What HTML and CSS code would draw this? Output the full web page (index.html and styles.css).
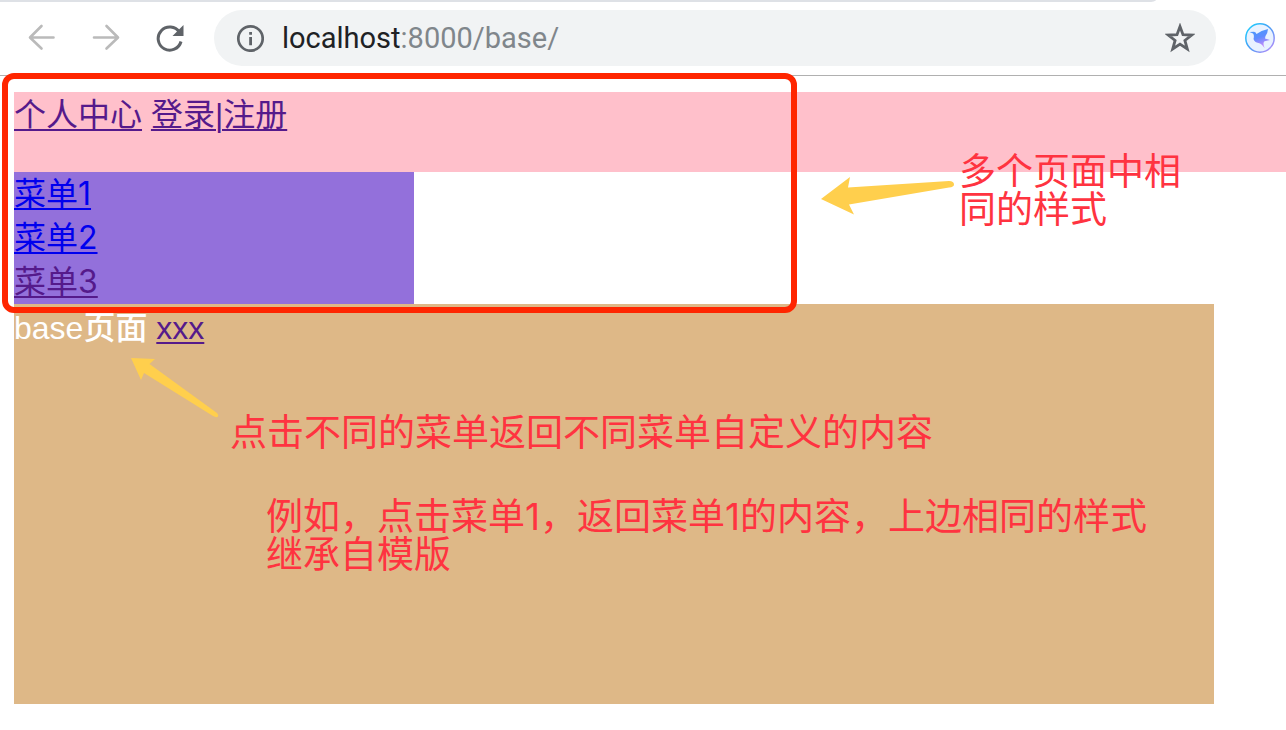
FILE: index.html
```html
<!DOCTYPE html>
<html lang="zh-CN">
<head>
<meta charset="utf-8">
<title>base</title>
<link rel="stylesheet" href="styles.css">
</head>
<body>
<header class="browser">
  <div class="tab-strip"></div>
  <div class="toolbar">
    <nav class="history">
      <button class="tool" aria-label="后退" disabled><svg width="28" height="28" viewBox="0 0 28 28" fill="none" stroke="#bababa" stroke-width="2.6" stroke-linecap="round" stroke-linejoin="round"><path d="M25.500 13.500H2.500M13.500 2L2 13.500L13.500 24.500"/></svg></button>
      <button class="tool" aria-label="前进" disabled><svg width="28" height="28" viewBox="0 0 28 28" fill="none" stroke="#bababa" stroke-width="2.6" stroke-linecap="round" stroke-linejoin="round"><path d="M2 13.500H25M14.500 2L26 13.500L14.500 24.500"/></svg></button>
      <button class="tool" aria-label="重新加载"><svg width="28" height="28" viewBox="0 0 28 28" fill="none"><path d="M23.500 8.200A11.600 11.600 0 1 0 25 17.500" stroke="#5f6368" stroke-width="3"/><path d="M27.500 1V12H16.500Z" fill="#5f6368"/></svg></button>
    </nav>
    <div class="address">
      <button class="icon" aria-label="网站信息"><svg width="28" height="28" viewBox="0 0 28 28"><circle cx="14.500" cy="14.500" r="12.200" fill="none" stroke="#5f6368" stroke-width="2.700"/><path d="M13.200 8h2.800v2.800h-2.800zM13.200 12.900h2.800v8.300h-2.800z" fill="#5f6368"/></svg></button>
      <div class="url" role="textbox" aria-label="地址" contenteditable="true" spellcheck="false">localhost<span class="path">:8000/base/</span></div>
      <button class="icon" aria-label="添加书签"><svg width="30" height="30" viewBox="0 0 30 30"><path d="M15 3.500L18 11.700L26.700 12L19.900 17.400L22.300 26L15 21.100L7.700 26L10.100 17.400L3.300 12L12 11.700Z" fill="none" stroke="#5f6368" stroke-width="2.800"/></svg></button>
    </div>
    <button class="icon" aria-label="扩展程序"><svg width="30" height="30" viewBox="0 0 30 30"><defs><linearGradient id="ring" x1="0" y1="0" x2="1" y2="1"><stop offset="0" stop-color="#16d5ff"/><stop offset=".5" stop-color="#4b9bf5"/><stop offset="1" stop-color="#c58bfa"/></linearGradient><linearGradient id="bird" x1="0" y1="0" x2=".4" y2="1"><stop offset="0" stop-color="#429cfb"/><stop offset=".55" stop-color="#5e8bff"/><stop offset="1" stop-color="#c58bfa"/></linearGradient></defs><circle cx="15" cy="15" r="14.200" fill="#e9f2ff" stroke="url(#ring)" stroke-width="1.500"/><path d="M4.500 9L9 8.700Q11 9 11.500 11Q16 7.500 23 6Q22.800 10 20.500 13L20 15.500L25 17L19.500 18.200Q17.500 19.500 19.500 25Q16.500 20.500 13.500 20Q9.500 19.500 8.500 16Q9.500 12 8 10.500Z" fill="url(#bird)"/></svg></button>
  </div>
</header>

<main class="page">
  <div class="top"><a class="visited" href="#center">个人中心</a> <a class="visited" href="#login">登录|注册</a></div>
  <nav class="menu">
    <a href="#menu1">菜单1</a>
    <a href="#menu2">菜单2</a>
    <a class="visited" href="#menu3">菜单3</a>
  </nav>
  <section class="content">base页面 <a class="visited" href="#xxx">xxx</a></section>
</main>

<div class="frame"></div>
<svg class="arrow arrow-shared" width="134" height="40" viewBox="0 0 134 40" fill="#ffcf4d"><path d="M0 22L29 0L27 10.500L128 4Q133 4 133 7.500Q133 10 128 10.500L28 27.500L33 37.500Z"/></svg>
<svg class="arrow arrow-content" width="90" height="62" viewBox="0 0 90 62" fill="#ffcf4d"><path d="M0 0L24 1L18.500 6L86 55Q88 57 87 58.500Q85.500 60 82 58L13 15L10 22Z"/></svg>
<p class="note note-shared">多个页面中相<br>同的样式</p>
<p class="note note-content">点击不同的菜单返回不同菜单自定义的内容</p>
<p class="note note-example">例如，点击菜单1，返回菜单1的内容，上边相同的样式<br>继承自模版</p>
</body>
</html>
```
FILE: styles.css
```css
* { box-sizing: border-box; }

body {
  position: relative;
  margin: 0;
  background: #fff;
  color: #fff;
  font: 32px/44px "Liberation Sans", "Noto Sans CJK SC", sans-serif;
}

button {
  display: flex;
  padding: 0;
  border: 0;
  background: none;
}

.browser { border-bottom: 1px solid #b0b0b0; }

.tab-strip {
  height: 2px;
  margin-right: 130px;
  border-bottom-right-radius: 8px 2px;
  background: #dee1e6;
}

.toolbar {
  display: flex;
  align-items: center;
  padding: 8px 11px 9px 28px;
}

.history {
  display: flex;
  gap: 36px;
  margin-right: 30px;
}

.address {
  display: flex;
  flex: 1;
  align-items: center;
  gap: 18px;
  height: 56px;
  margin-right: 29px;
  padding: 0 21px 0 22px;
  border-radius: 28px;
  background: #f1f3f4;
}

.url {
  flex: 1;
  outline: 0;
  color: #202124;
  font: 29px/40px Roboto, sans-serif;
}

.path { color: #80868b; }

.page { padding: 16px 0 26px 14px; }

a {
  color: #00e;
  text-decoration-thickness: 2px;
  text-underline-offset: 3px;
}

.visited { color: #551a8b; }

.top {
  height: 80px;
  padding-top: 1px;
  background: pink;
}

.menu {
  display: flex;
  flex-direction: column;
  align-items: flex-start;
  max-width: 400px;
  background: mediumpurple;
  font-family: Inter, "Noto Sans CJK SC", sans-serif;
}

.content {
  max-width: 1200px;
  min-height: 400px;
  padding-top: 2px;
  background: burlywood;
  font-weight: 500;
}

.frame {
  position: absolute;
  top: 73px;
  left: 2px;
  width: 795px;
  height: 240px;
  border: 6px solid #ff2600;
  border-radius: 12px;
  pointer-events: none;
}

.arrow { position: absolute; }

.arrow-shared { top: 177px; left: 821px; }

.arrow-content { top: 358px; left: 131px; }

.note {
  position: absolute;
  margin: 0;
  color: #ff3340;
  font-family: Inter, "Noto Sans CJK SC", sans-serif;
  font-size: 37px;
  line-height: 38px;
  white-space: nowrap;
}

.note-shared { top: 153px; left: 959px; }

.note-content { top: 414px; left: 230px; }

.note-example { top: 498px; left: 266px; }
```
